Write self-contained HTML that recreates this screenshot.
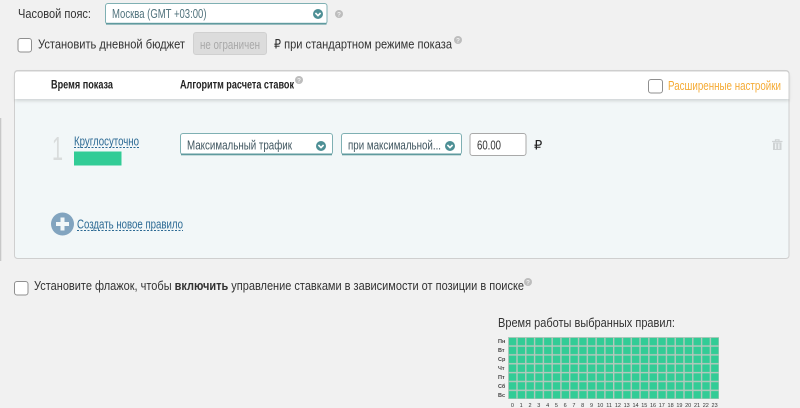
<!DOCTYPE html>
<html><head><meta charset="utf-8"><style>
html,body{margin:0;padding:0;width:800px;height:408px;overflow:hidden;background:#f1f1f1}
svg{display:block}
text{font-family:"Liberation Sans",sans-serif;font-size:13px;fill:#333}
.b{font-weight:bold;font-size:11.5px;fill:#222}
.l{font-size:5.5px;fill:#333;text-anchor:middle}
.d{font-size:5.5px;font-weight:bold;fill:#444}
</style></head><body>
<svg width="800" height="408" viewBox="0 0 800 408" xmlns="http://www.w3.org/2000/svg">
<defs>
<filter id="s" x="-2%" y="-20%" width="104%" height="150%"><feDropShadow dx="0" dy="2" stdDeviation="1.5" flood-color="#000" flood-opacity=".14"/></filter>
<pattern id="g" x="508" y="337" width="8.79" height="8.86" patternUnits="userSpaceOnUse"><rect width="8.79" height="8.86" fill="#b4c8bc"/><rect x=".9" y=".9" width="7.4" height="7.4" fill="#32cc96"/></pattern>
<g id="ch"><circle r="5" fill="#4d8f95"/><path d="M-2.6-1 0 1.6 2.6-1" fill="none" stroke="#fff" stroke-width="1.6"/></g>
<g id="q"><circle r="4" fill="#bdbdbd"/><text x="0" y="2.4" text-anchor="middle" style="font-size:6.5px;font-weight:bold;fill:#f1f1f1">?</text></g>
</defs>
<rect width="800" height="408" fill="#f1f1f1"/>
<rect x="0" y="118" width="1.3" height="143" fill="#c8c8c8"/>

<text x="18" y="18" textLength="73" lengthAdjust="spacingAndGlyphs">Часовой пояс:</text>
<rect x="105.500" y="3.500" width="221.500" height="20.500" rx="2.500" fill="#fff" stroke="#7fb0b3"/>
<rect x="106" y="22.800" width="220.500" height="1.800" fill="#5f9a9e"/>
<text x="112" y="18" textLength="94.500" lengthAdjust="spacingAndGlyphs" style="fill:#50727c">Москва (GMT +03:00)</text>
<use href="#ch" x="318" y="14"/>
<use href="#q" x="339" y="14"/>

<rect x="18" y="38.500" width="13.500" height="13.500" rx="2.500" fill="#fff" stroke="#8f8f8f"/>
<text x="38" y="48.500" textLength="147" lengthAdjust="spacingAndGlyphs">Установить дневной бюджет</text>
<rect x="193.500" y="32.500" width="73" height="22" rx="2.500" fill="#dcdcdc" stroke="#d0d0d0"/>
<text x="200" y="49" textLength="60" lengthAdjust="spacingAndGlyphs" style="fill:#a8a8a8">не ограничен</text>
<text x="274" y="48.500" textLength="178" lengthAdjust="spacingAndGlyphs">₽ при стандартном режиме показа</text>
<use href="#q" x="458" y="40"/>

<rect x="14.500" y="70.500" width="774.500" height="188" rx="3" fill="#f2f7f8" stroke="#cfcfcf"/>
<path d="M15 99V74a3 3 0 0 1 3-3H786a3 3 0 0 1 3 3V99Z" fill="#fff" filter="url(#s)"/>
<path d="M14.500 99V74a3 3 0 0 1 3-3H786a3 3 0 0 1 3 3V99" fill="none" stroke="#cfcfcf"/>
<text class="b" x="51" y="88.500" textLength="62" lengthAdjust="spacingAndGlyphs">Время показа</text>
<text class="b" x="180" y="88.500" textLength="114" lengthAdjust="spacingAndGlyphs">Алгоритм расчета ставок</text>
<use href="#q" x="299" y="80"/>
<rect x="648.500" y="79.500" width="14" height="13.500" rx="2.500" fill="#fff" stroke="#8f8f8f"/>
<text x="668" y="90" textLength="113" lengthAdjust="spacingAndGlyphs" style="fill:#f5ab35">Расширенные настройки</text>

<text x="52" y="160" textLength="11" lengthAdjust="spacingAndGlyphs" style="font-size:33px;fill:#d9dcdc">1</text>
<text x="74" y="145.500" textLength="65" lengthAdjust="spacingAndGlyphs" style="fill:#2c6a94;font-size:12.500px">Круглосуточно</text>
<line x1="74" y1="147.500" x2="139" y2="147.500" stroke="#2c6a94" stroke-dasharray="2 1.500"/>
<rect x="74" y="151.500" width="47.500" height="14" fill="#32cc96"/>

<rect x="180.500" y="133.500" width="152" height="21" rx="2.500" fill="#fff" stroke="#7fb0b3"/>
<rect x="181" y="153.500" width="151" height="1.800" fill="#5f9a9e"/>
<text x="187" y="149.500" textLength="105" lengthAdjust="spacingAndGlyphs" style="fill:#3f555f">Максимальный трафик</text>
<use href="#ch" x="321" y="146"/>

<rect x="341.500" y="133.500" width="120" height="21" rx="2.500" fill="#fff" stroke="#7fb0b3"/>
<rect x="342" y="153.500" width="119" height="1.800" fill="#5f9a9e"/>
<text x="348" y="149.500" textLength="93" lengthAdjust="spacingAndGlyphs" style="fill:#3f555f">при максимальной...</text>
<use href="#ch" x="450" y="146"/>

<rect x="470" y="133.500" width="56" height="22" rx="2.500" fill="#fff" stroke="#a9a9a9"/>
<text x="477" y="149.500" textLength="24" lengthAdjust="spacingAndGlyphs">60.00</text>
<text x="534" y="149.500" style="fill:#222">₽</text>

<path d="M772 141.500H782.500M775.500 141.300V139.800h3.500v1.500" fill="none" stroke="#cfd3d4" stroke-width="1.200"/>
<path d="M773 142.500h8.500v7.500h-8.500Z" fill="#cfd3d4"/><path d="M775 143.500h1.300v5.500H775ZM778.200 143.500h1.300v5.500h-1.300Z" fill="#eef2f3"/>

<circle cx="62.500" cy="224" r="11.500" fill="#82a4bf"/>
<path d="M62.500 217.500v13M56 224h13" stroke="#f2f7f8" stroke-width="4"/>
<text x="77" y="228.500" textLength="106" lengthAdjust="spacingAndGlyphs" style="fill:#2c6a94">Создать новое правило</text>
<line x1="77" y1="230.500" x2="183" y2="230.500" stroke="#2c6a94" stroke-dasharray="2 1.500"/>

<rect x="14.500" y="281.500" width="13.500" height="13.500" rx="2.500" fill="#fff" stroke="#8f8f8f"/>
<text x="34" y="290" textLength="490" lengthAdjust="spacingAndGlyphs">Установите флажок, чтобы <tspan font-weight="bold">включить</tspan> управление ставками в зависимости от позиции в поиске</text>
<use href="#q" x="528" y="282"/>

<text x="498" y="327" textLength="177" lengthAdjust="spacingAndGlyphs">Время работы выбранных правил:</text>
<rect x="508" y="337" width="211" height="62" fill="url(#g)"/>
<text class="d" x="498" y="343">Пн</text><text class="d" x="498" y="352">Вт</text><text class="d" x="498" y="361">Ср</text><text class="d" x="498" y="370">Чт</text><text class="d" x="498" y="379">Пт</text><text class="d" x="498" y="388">Сб</text><text class="d" x="498" y="397">Вс</text>
<text class="l" x="512.400" y="407">0</text><text class="l" x="521.200" y="407">1</text><text class="l" x="530" y="407">2</text><text class="l" x="538.800" y="407">3</text><text class="l" x="547.600" y="407">4</text><text class="l" x="556.400" y="407">5</text><text class="l" x="565.100" y="407">6</text><text class="l" x="573.900" y="407">7</text><text class="l" x="582.700" y="407">8</text><text class="l" x="591.500" y="407">9</text><text class="l" x="600.300" y="407">10</text><text class="l" x="609.100" y="407">11</text><text class="l" x="617.900" y="407">12</text><text class="l" x="626.700" y="407">13</text><text class="l" x="635.500" y="407">14</text><text class="l" x="644.300" y="407">15</text><text class="l" x="653" y="407">16</text><text class="l" x="661.800" y="407">17</text><text class="l" x="670.600" y="407">18</text><text class="l" x="679.400" y="407">19</text><text class="l" x="688.200" y="407">20</text><text class="l" x="697" y="407">21</text><text class="l" x="705.800" y="407">22</text><text class="l" x="714.600" y="407">23</text>
</svg>
</body></html>
